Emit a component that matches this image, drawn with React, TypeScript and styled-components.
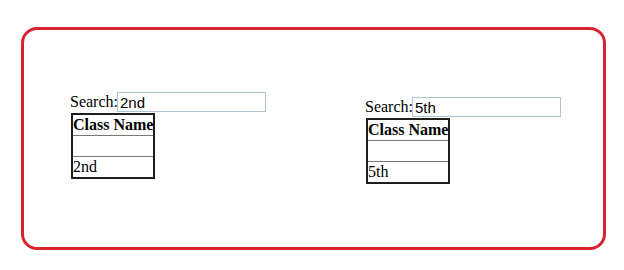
import React, { useState } from 'react';
import styled, { createGlobalStyle } from 'styled-components';

const GlobalStyle = createGlobalStyle`
  html, body {
    margin: 0;
    padding: 0;
    background: #ffffff;
  }
  body {
    font-family: "Liberation Serif", "Times New Roman", serif;
    font-size: 16px;
    color: #000;
  }
`;

const Frame = styled.div`
  box-sizing: border-box;
  width: 585px;
  height: 223px;
  margin: 27px 0 0 21px;
  border: 3px solid #d8222e;
  border-radius: 16px;
  padding: 62px 0 0 46px;
  display: grid;
  grid-template-columns: 295px 1fr;
  align-items: start;
`;

const Panel = styled.div<{ $offset?: number }>`
  margin-top: ${({ $offset }) => $offset || 0}px;
`;

const SearchRow = styled.div`
  display: flex;
  align-items: center;
  height: 20px;
`;

const Label = styled.span`
  line-height: 20px;
`;

const SearchInput = styled.input`
  box-sizing: border-box;
  width: 149px;
  height: 20px;
  margin: 0 0 0 -1px;
  padding: 0 2px;
  border: 1px solid #abc6d8;
  font-family: "Liberation Sans", Arial, sans-serif;
  font-size: 15px;
  color: #000;
  outline: none;
`;

const Table = styled.table`
  border-collapse: collapse;
  border: 2px solid #1e1e1e;
  margin: 1px 0 0 1px;
`;

const HeadCell = styled.th`
  border: 1px solid #777;
  padding: 1px 0 1px;
  font-weight: bold;
  text-align: left;
  line-height: 18px;
  white-space: nowrap;
`;

const Cell = styled.td`
  border: 1px solid #777;
  padding: 1px 0 1px;
  line-height: 18px;
`;

type FilterProps = { initial: string; offset?: number };

const ClassFilter = ({ initial, offset }: FilterProps) => {
  const [query, setQuery] = useState(initial);

  return (
    <Panel $offset={offset}>
      <SearchRow>
        <Label>Search:</Label>
        <SearchInput value={query} onChange={(e) => setQuery(e.target.value)} />
      </SearchRow>
      <Table>
        <thead>
          <tr>
            <HeadCell>Class Name</HeadCell>
          </tr>
        </thead>
        <tbody>
          <tr>
            <Cell>&nbsp;</Cell>
          </tr>
          <tr>
            <Cell>{query}</Cell>
          </tr>
        </tbody>
      </Table>
    </Panel>
  );
};

export default function App() {
  return (
    <>
      <GlobalStyle />
      <Frame>
        <ClassFilter initial="2nd" />
        <ClassFilter initial="5th" offset={5} />
      </Frame>
    </>
  );
}
